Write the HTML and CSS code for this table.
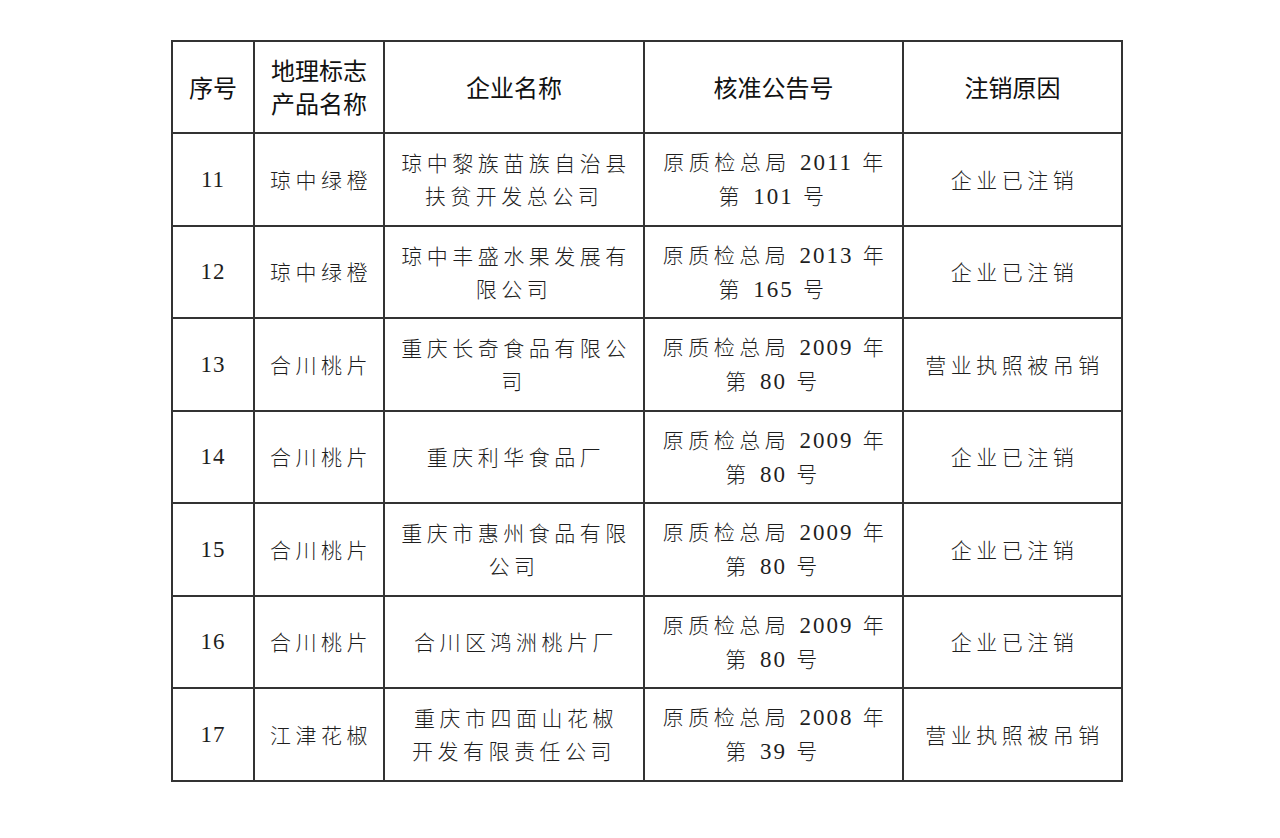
FILE: index.html
```html
<!DOCTYPE html>
<html lang="zh">
<head>
<meta charset="utf-8">
<link rel="stylesheet" href="styles.css">
</head>
<body>
<div class="page">
<table class="list">
  <colgroup>
    <col class="c1"><col class="c2"><col class="c3"><col class="c4"><col class="c5">
  </colgroup>
  <thead>
    <tr>
      <th>序号</th>
      <th>地理标志<br>产品名称</th>
      <th>企业名称</th>
      <th>核准公告号</th>
      <th>注销原因</th>
    </tr>
  </thead>
  <tbody>
    <tr>
      <td class="num">11</td>
      <td>琼中绿橙</td>
      <td>琼中黎族苗族自治县<br>扶贫开发总公司</td>
      <td>原质检总局 <span class="n">2011</span> 年<br>第 <span class="n">101</span> 号</td>
      <td>企业已注销</td>
    </tr>
    <tr>
      <td class="num">12</td>
      <td>琼中绿橙</td>
      <td>琼中丰盛水果发展有<br>限公司</td>
      <td>原质检总局 <span class="n">2013</span> 年<br>第 <span class="n">165</span> 号</td>
      <td>企业已注销</td>
    </tr>
    <tr>
      <td class="num">13</td>
      <td>合川桃片</td>
      <td>重庆长奇食品有限公<br>司</td>
      <td>原质检总局 <span class="n">2009</span> 年<br>第 <span class="n">80</span> 号</td>
      <td>营业执照被吊销</td>
    </tr>
    <tr>
      <td class="num">14</td>
      <td>合川桃片</td>
      <td>重庆利华食品厂</td>
      <td>原质检总局 <span class="n">2009</span> 年<br>第 <span class="n">80</span> 号</td>
      <td>企业已注销</td>
    </tr>
    <tr>
      <td class="num">15</td>
      <td>合川桃片</td>
      <td>重庆市惠州食品有限<br>公司</td>
      <td>原质检总局 <span class="n">2009</span> 年<br>第 <span class="n">80</span> 号</td>
      <td>企业已注销</td>
    </tr>
    <tr>
      <td class="num">16</td>
      <td>合川桃片</td>
      <td>合川区鸿洲桃片厂</td>
      <td>原质检总局 <span class="n">2009</span> 年<br>第 <span class="n">80</span> 号</td>
      <td>企业已注销</td>
    </tr>
    <tr>
      <td class="num">17</td>
      <td>江津花椒</td>
      <td>重庆市四面山花椒<br>开发有限责任公司</td>
      <td>原质检总局 <span class="n">2008</span> 年<br>第 <span class="n">39</span> 号</td>
      <td>营业执照被吊销</td>
    </tr>
  </tbody>
</table>
</div>
</body>
</html>
```

FILE: styles.css
```css
html, body {
  margin: 0;
  padding: 0;
  background: #ffffff;
}

.page {
  padding: 40px 0 0 171px;
}

.list {
  border-collapse: collapse;
  table-layout: fixed;
  width: 950px;
  font-family: "Noto Sans CJK SC", "Liberation Serif", serif;
  color: #1e1e1e;
}

.c1 { width: 82px; }
.c2 { width: 130px; }
.c3 { width: 260px; }
.c4 { width: 259px; }
.c5 { width: 219px; }

.list th,
.list td {
  border: 2px solid #333333;
  text-align: center;
  vertical-align: middle;
  padding: 0;
}

.list thead tr { height: 92px; }
.list tbody tr { height: 92.5px; }

.list th {
  font-size: 24px;
  font-weight: 400;
  line-height: 33px;
  color: #111111;
  padding-bottom: 2px;
}

.list td {
  font-size: 21px;
  font-weight: 300;
  line-height: 33px;
  letter-spacing: 4.5px;
  text-indent: 4px;
}

.list td .n {
  font-family: "Liberation Serif", "Noto Sans CJK SC", serif;
  font-size: 23px;
  letter-spacing: 2px;
}

.list td.num {
  font-family: "Liberation Serif", "Noto Sans CJK SC", serif;
  font-size: 23px;
  letter-spacing: 1px;
  text-indent: 0;
}
```
